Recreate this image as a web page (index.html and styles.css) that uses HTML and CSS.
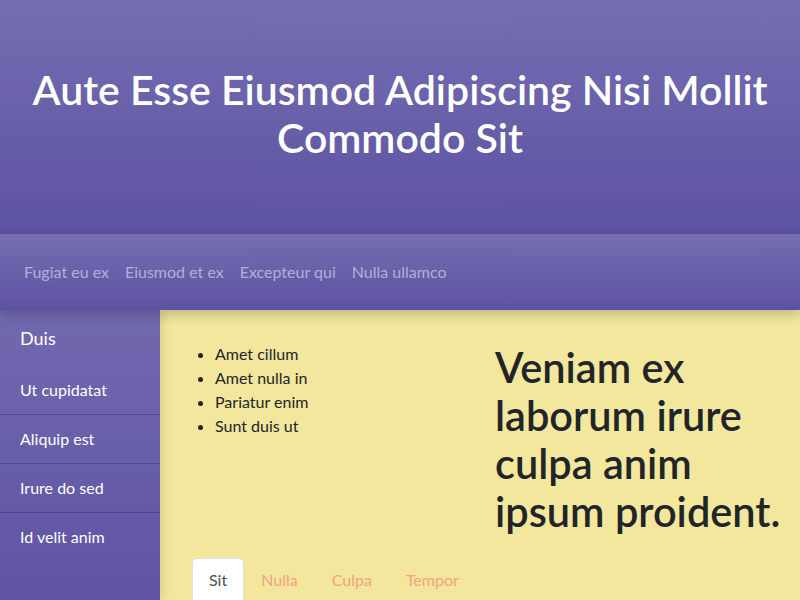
FILE: index.html
```html
<!DOCTYPE html>
<html lang="en">
<head>
<meta charset="utf-8">
<title>Aute Esse</title>
<link rel="stylesheet" href="styles.css">
</head>
<body>
<header class="hero">
  <h1 class="hero-title">Aute Esse Eiusmod Adipiscing Nisi Mollit Commodo Sit</h1>
</header>
<nav class="topnav">
  <a class="topnav-link" href="#">Fugiat eu ex</a>
  <a class="topnav-link" href="#">Eiusmod et ex</a>
  <a class="topnav-link" href="#">Excepteur qui</a>
  <a class="topnav-link" href="#">Nulla ullamco</a>
</nav>
<div class="layout">
  <aside class="sidebar">
    <div class="sidebar-title">Duis</div>
    <a class="sidebar-item" href="#">Ut cupidatat</a>
    <a class="sidebar-item" href="#">Aliquip est</a>
    <a class="sidebar-item" href="#">Irure do sed</a>
    <a class="sidebar-item last" href="#">Id velit anim</a>
  </aside>
  <main class="main">
    <div class="cols">
      <ul class="bullets">
        <li>Amet cillum</li>
        <li>Amet nulla in</li>
        <li>Pariatur enim</li>
        <li>Sunt duis ut</li>
      </ul>
      <h2 class="lead">Veniam ex laborum irure culpa anim ipsum proident.</h2>
    </div>
    <div class="tabs">
      <a class="tab active" href="#">Sit</a>
      <a class="tab" href="#">Nulla</a>
      <a class="tab" href="#">Culpa</a>
      <a class="tab" href="#">Tempor</a>
    </div>
  </main>
</div>
</body>
</html>
```
FILE: styles.css
```css
* { box-sizing: border-box; }
html, body { height: 100%; }
body {
  margin: 0;
  font-family: Lato, "Open Sans", sans-serif;
  font-size: 16px;
  line-height: 1.5;
  color: #212529;
  display: flex;
  flex-direction: column;
  overflow: hidden;
}
a { text-decoration: none; }
.hero {
  background: linear-gradient(180deg, #756eb1 0%, #5c52a3 100%);
  padding: 66px 16px 72px;
  text-align: center;
}
.hero-title {
  margin: 0;
  color: #fff;
  font-size: 41px;
  font-weight: 600;
  line-height: 48px;
}
.topnav {
  position: relative;
  z-index: 2;
  display: flex;
  padding: 26px 16px;
  background: linear-gradient(180deg, #756eb1 0%, #5c52a3 100%);
  box-shadow: 0 4px 12px rgba(0,0,0,0.22);
}
.topnav-link {
  color: rgba(255,255,255,0.5);
  padding: 0 8px;
  line-height: 24px;
  font-size: 16px;
}
.layout {
  flex: 1;
  display: flex;
}
.sidebar {
  position: relative;
  z-index: 1;
  width: 160px;
  flex: none;
  background: linear-gradient(180deg, #7169af 0%, #5e54a3 100%);
  box-shadow: 2px 0 10px rgba(0,0,0,0.12);
  display: flex;
  flex-direction: column;
}
.sidebar-title {
  color: #fff;
  font-size: 18px;
  line-height: 27px;
  padding: 15px 20px 14px;
}
.sidebar-item {
  color: #fff;
  padding: 12px 20px;
  line-height: 24px;
  border-bottom: 1px solid rgba(40,30,110,0.35);
}
.sidebar-item.last { border-bottom: none; }
.main {
  flex: 1;
  background: #f2e79c;
  padding: 32px 8px 0 32px;
  display: flex;
  flex-direction: column;
}
.cols {
  display: grid;
  grid-template-columns: 273px 1fr;
  gap: 30px;
}
.bullets {
  margin: 0;
  padding-left: 23px;
  line-height: 24px;
}
.lead {
  margin: 1px 0 0;
  font-size: 41.5px;
  font-weight: 600;
  line-height: 48px;
}
.tabs {
  display: flex;
  margin-top: 23px;
}
.tab {
  color: #f5a186;
  padding: 9px 16px 8px;
  line-height: 24px;
  border: 1px solid transparent;
  border-radius: 5px 5px 0 0;
}
.tab.active {
  background: #fff;
  color: #495057;
  border-color: #dee2e6;
}
```
